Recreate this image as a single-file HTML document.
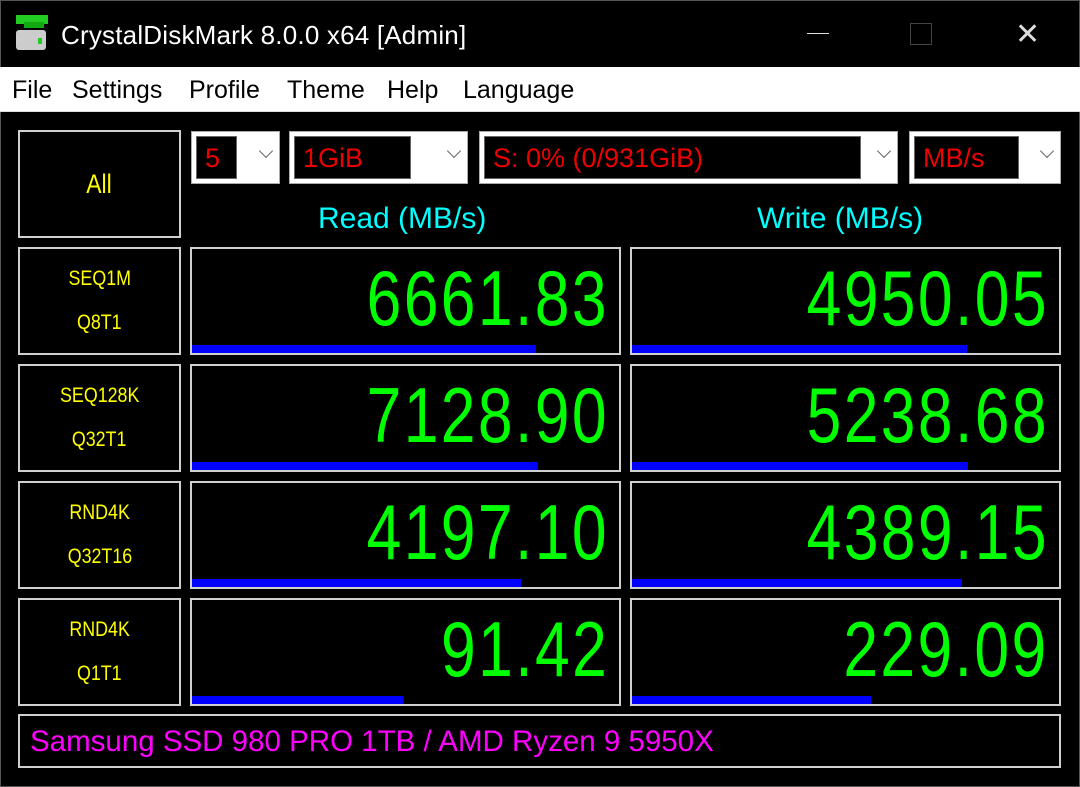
<!DOCTYPE html>
<html><head><meta charset="utf-8"><style>
*{margin:0;padding:0;box-sizing:border-box}
body{width:1080px;height:787px;background:#000;overflow:hidden;position:relative;font-family:"Liberation Sans","DejaVu Sans",sans-serif}
.a{position:absolute}
.box{position:absolute;border:2px solid #d0d0d0;background:#000}
.lbl{color:#ff0;font-size:21px;text-align:center;line-height:44px;display:flex;flex-direction:column;justify-content:center;align-items:center}
.lbl span{display:block;transform:scaleX(.85)}
.num{position:absolute;right:10px;top:10px;color:#0f0;font-size:78px;line-height:78px;transform:scaleX(.8);transform-origin:right center;letter-spacing:3px;font-weight:300}
.bar{position:absolute;left:0;bottom:0;height:8px;background:#00f}
.dd{position:absolute;background:#fff;border:1px solid #aaa}
.dd .in{position:absolute;left:4px;top:4px;bottom:4px;background:#000;color:#e00;font-size:27px;line-height:42px;padding-left:8px;border:1px solid #666}
.dd .ch{position:absolute;right:8px;top:14px;width:10px;height:10px;border-right:1.5px solid #666;border-bottom:1.5px solid #666;transform:rotate(45deg)}
.hd{position:absolute;color:#0ff;font-size:30px;top:201px;line-height:36px}
.m{position:absolute;top:73px;font-size:25px;line-height:34px;color:#000}
</style></head><body>
<div class="a" style="left:0;top:0;width:1080px;height:787px;border:1px solid #555"></div>
<div class="a" style="left:16px;top:15px;width:32px;height:9px;background:#2c2"></div>
<div class="a" style="left:24px;top:22px;width:20px;height:6px;background:#1a1"></div>
<div class="a" style="left:16px;top:30px;width:30px;height:20px;background:#ccc;border-radius:3px"></div>
<div class="a" style="left:38px;top:38px;width:4px;height:6px;background:#2c2"></div>
<div class="a" style="left:61px;top:18px;color:#fff;font-size:26px;line-height:34px;letter-spacing:.2px">CrystalDiskMark 8.0.0 x64 [Admin]</div>
<div class="a" style="left:807px;top:33px;width:22px;height:1px;background:#ddd"></div>
<div class="a" style="left:910px;top:23px;width:22px;height:22px;border:1px solid #444"></div>
<div class="a" style="left:1015px;top:22px;font-size:30px;color:#ddd;line-height:26px">✕</div>
<div class="a" style="left:0;top:67px;width:1080px;height:45px;background:#fff;border-bottom:1px solid #ddd"></div>
<div class="m" style="left:12px">File</div>
<div class="m" style="left:72px">Settings</div>
<div class="m" style="left:189px">Profile</div>
<div class="m" style="left:287px">Theme</div>
<div class="m" style="left:387px">Help</div>
<div class="m" style="left:463px">Language</div>
<div class="box lbl" style="left:18px;top:130px;width:163px;height:108px;font-size:27px"><span>All</span></div>
<div class="dd" style="left:191px;top:131px;width:89px;height:53px"><div class="in" style="width:41px">5</div><div class="ch"></div></div>
<div class="dd" style="left:289px;top:131px;width:179px;height:53px"><div class="in" style="width:117px">1GiB</div><div class="ch"></div></div>
<div class="dd" style="left:479px;top:131px;width:419px;height:53px"><div class="in" style="width:377px">S: 0% (0/931GiB)</div><div class="ch"></div></div>
<div class="dd" style="left:909px;top:131px;width:152px;height:53px"><div class="in" style="width:105px">MB/s</div><div class="ch"></div></div>
<div class="hd" style="left:318px">Read (MB/s)</div>
<div class="hd" style="left:757px">Write (MB/s)</div>

<div class="box lbl" style="left:18px;top:247px;width:163px;height:108px"><span>SEQ1M</span><span>Q8T1</span></div>
<div class="box" style="left:190px;top:247px;width:431px;height:108px"><div class="num">6661.83</div><div class="bar" style="width:344px"></div></div>
<div class="box" style="left:630px;top:247px;width:431px;height:108px"><div class="num">4950.05</div><div class="bar" style="width:335px"></div></div>

<div class="box lbl" style="left:18px;top:364px;width:163px;height:108px"><span>SEQ128K</span><span>Q32T1</span></div>
<div class="box" style="left:190px;top:364px;width:431px;height:108px"><div class="num">7128.90</div><div class="bar" style="width:346px"></div></div>
<div class="box" style="left:630px;top:364px;width:431px;height:108px"><div class="num">5238.68</div><div class="bar" style="width:336px"></div></div>

<div class="box lbl" style="left:18px;top:481px;width:163px;height:108px"><span>RND4K</span><span>Q32T16</span></div>
<div class="box" style="left:190px;top:481px;width:431px;height:108px"><div class="num">4197.10</div><div class="bar" style="width:329px"></div></div>
<div class="box" style="left:630px;top:481px;width:431px;height:108px"><div class="num">4389.15</div><div class="bar" style="width:330px"></div></div>

<div class="box lbl" style="left:18px;top:598px;width:163px;height:108px"><span>RND4K</span><span>Q1T1</span></div>
<div class="box" style="left:190px;top:598px;width:431px;height:108px"><div class="num">91.42</div><div class="bar" style="width:211px"></div></div>
<div class="box" style="left:630px;top:598px;width:431px;height:108px"><div class="num">229.09</div><div class="bar" style="width:239px"></div></div>

<div class="box" style="left:18px;top:714px;width:1043px;height:54px"><div class="a" style="left:10px;top:8px;color:#f0f;font-size:29.5px;line-height:36px;white-space:nowrap">Samsung SSD 980 PRO 1TB / AMD Ryzen 9 5950X</div></div>
</body></html>
